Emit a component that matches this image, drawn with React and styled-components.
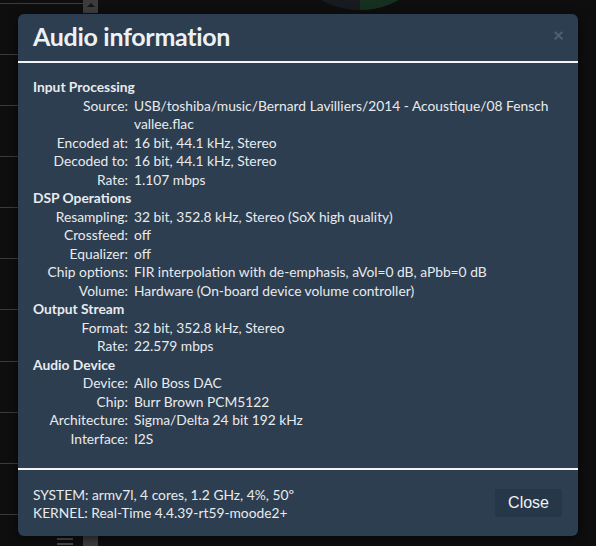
import React from 'react';
import styled, { createGlobalStyle } from 'styled-components';

const GlobalStyle = createGlobalStyle`
  html, body {
    margin: 0;
    padding: 0;
    background: #0e0e0e;
    font-family: Lato, "Open Sans", sans-serif;
  }
`;

const Page = styled.div`
  position: relative;
  width: 596px;
  height: 546px;
  overflow: hidden;
  background: #0e0e0e;
`;

const BgLine = styled.div`
  position: absolute;
  left: 0;
  top: ${(p) => p.top}px;
  width: ${(p) => p.width || 18}px;
  height: 1px;
  background: #3a3a3a;
`;

const ScrollBox = styled.div`
  position: absolute;
  left: 83px;
  top: ${(p) => p.top}px;
  width: 15px;
  height: 16px;
  background: #3c3c3c;
`;

const Arrow = styled.div`
  position: absolute;
  left: 87px;
  top: 3px;
  width: 0;
  height: 0;
  border-left: 4px solid transparent;
  border-right: 4px solid transparent;
  border-bottom: 4px solid #151515;
`;

const Knob = styled.div`
  position: absolute;
  left: 280px;
  top: -150px;
  width: 160px;
  height: 160px;
  border-radius: 50%;
  background: linear-gradient(90deg, #171a1f 50%, #15301f 50%);
`;

const MenuGlyph = styled.div`
  position: absolute;
  left: 57px;
  top: 533px;
  width: 16px;
  display: flex;
  flex-direction: column;
  gap: 3px;
  span {
    height: 2px;
    background: #4a4a4a;
  }
`;

const Modal = styled.div`
  position: absolute;
  left: 18px;
  top: 14px;
  width: 560px;
  height: 522px;
  background: #2d3e50;
  border-radius: 6px;
  display: flex;
  flex-direction: column;
  color: #e8ebee;
  box-shadow: 0 3px 10px rgba(0, 0, 0, 0.5);
`;

const Header = styled.div`
  height: 47px;
  padding: 0 15px;
  display: flex;
  align-items: center;
  justify-content: space-between;
  border-bottom: 2px solid #f2f4f6;
`;

const Title = styled.h3`
  margin: -4px 0 0;
  font-size: 25px;
  font-weight: 700;
  letter-spacing: -0.3px;
  color: #eef1f4;
`;

const CloseX = styled.span`
  font-size: 19px;
  font-weight: 700;
  color: #4f6275;
  margin-right: -1px;
  margin-top: -6px;
`;

const Body = styled.div`
  flex: 1;
  padding: 15px 15px 0;
  font-size: 13.8px;
  line-height: 18.5px;
`;

const Section = styled.div`
  font-weight: 700;
`;

const Row = styled.div`
  display: grid;
  grid-template-columns: 95px 1fr;
  column-gap: 6px;
  padding-right: 6px;
`;

const Label = styled.div`
  text-align: right;
  white-space: nowrap;
`;

const Footer = styled.div`
  height: 66px;
  border-top: 2px solid #f2f4f6;
  padding: 0 16px 0 15px;
  display: flex;
  align-items: center;
  justify-content: space-between;
  font-size: 13.8px;
  line-height: 18px;
`;

const SysInfo = styled.div`
  margin-top: 2px;
`;

const CloseButton = styled.button`
  background: #27374a;
  border: none;
  border-radius: 2px;
  color: #f0f2f4;
  font-family: "Liberation Sans", Arial, sans-serif;
  font-size: 16px;
  padding: 5px 13px;
  height: 28px;
  margin-top: 0;
`;

const sections = [
  {
    title: 'Input Processing',
    rows: [
      ['Source', 'USB/toshiba/music/Bernard Lavilliers/2014 - Acoustique/08 Fensch vallee.flac'],
      ['Encoded at', '16 bit, 44.1 kHz, Stereo'],
      ['Decoded to', '16 bit, 44.1 kHz, Stereo'],
      ['Rate', '1.107 mbps'],
    ],
  },
  {
    title: 'DSP Operations',
    rows: [
      ['Resampling', '32 bit, 352.8 kHz, Stereo (SoX high quality)'],
      ['Crossfeed', 'off'],
      ['Equalizer', 'off'],
      ['Chip options', 'FIR interpolation with de-emphasis, aVol=0 dB, aPbb=0 dB'],
      ['Volume', 'Hardware (On-board device volume controller)'],
    ],
  },
  {
    title: 'Output Stream',
    rows: [
      ['Format', '32 bit, 352.8 kHz, Stereo'],
      ['Rate', '22.579 mbps'],
    ],
  },
  {
    title: 'Audio Device',
    rows: [
      ['Device', 'Allo Boss DAC'],
      ['Chip', 'Burr Brown PCM5122'],
      ['Architecture', 'Sigma/Delta 24 bit 192 kHz'],
      ['Interface', 'I2S'],
    ],
  },
];

const bgLines = [54, 105, 156, 207, 258, 309, 361, 412, 463, 514];

const App = () => {
  return (
    <Page>
      <GlobalStyle />
      <BgLine top={3} width={90} />
      {bgLines.map((y) => (
        <BgLine key={y} top={y} />
      ))}
      <ScrollBox top={-3} />
      <Arrow />
      <ScrollBox top={530} />
      <Knob />
      <MenuGlyph>
        <span />
        <span />
        <span />
      </MenuGlyph>

      <Modal>
        <Header>
          <Title>Audio information</Title>
          <CloseX>×</CloseX>
        </Header>
        <Body>
          {sections.map((s) => (
            <div key={s.title}>
              <Section>{s.title}</Section>
              {s.rows.map(([label, value]) => (
                <Row key={label}>
                  <Label>{label}:</Label>
                  <div>{value}</div>
                </Row>
              ))}
            </div>
          ))}
        </Body>
        <Footer>
          <SysInfo>
            SYSTEM: armv7l, 4 cores, 1.2 GHz, 4%, 50º
            <br />
            KERNEL: Real-Time 4.4.39-rt59-moode2+
          </SysInfo>
          <CloseButton>Close</CloseButton>
        </Footer>
      </Modal>
    </Page>
  );
};

export default App;
